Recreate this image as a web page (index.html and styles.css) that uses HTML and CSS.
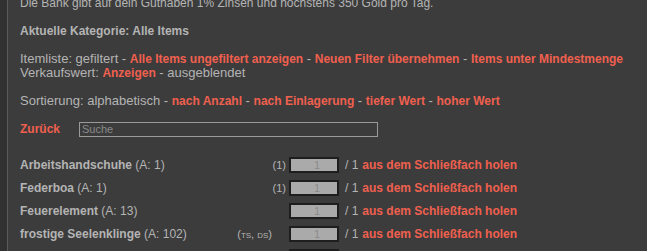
FILE: index.html
```html
<!DOCTYPE html>
<html lang="de">
<head>
    <meta charset="UTF-8">
    <title>Bank - Schließfach</title>
    <link rel="stylesheet" href="styles.css">
</head>
<body>
    <div class="frame">
        <div class="rail"></div>

        <div class="content">
            <!-- Info -->
            <p class="info intro">Die Bank gibt auf dein Guthaben 1% Zinsen und höchstens 350 Gold pro Tag.</p>

            <p class="info"><b>Aktuelle Kategorie: Alle Items</b></p>

            <p class="info">
                Itemliste: gefiltert - <a href="#">Alle Items ungefiltert anzeigen</a> - <a href="#">Neuen Filter übernehmen</a> - <a href="#">Items unter Mindestmenge</a><br>
                Verkaufswert: <a href="#">Anzeigen</a> - ausgeblendet
            </p>

            <p class="info">
                Sortierung: alphabetisch - <a href="#">nach Anzahl</a> - <a href="#">nach Einlagerung</a> - <a href="#">tiefer Wert</a> - <a href="#">hoher Wert</a>
            </p>

            <!-- Search -->
            <div class="search-row">
                <a href="#" class="back">Zurück</a>
                <input type="text" class="search" placeholder="Suche">
            </div>

            <!-- Items -->
            <div class="items">
                <div class="item">
                    <span class="name"><b>Arbeitshandschuhe</b> (A: 1)</span>
                    <span class="note">(1)</span>
                    <input type="text" class="amount" value="1">
                    <span class="max">/ 1</span>
                    <a href="#" class="take">aus dem Schließfach holen</a>
                </div>
                <div class="item">
                    <span class="name"><b>Federboa</b> (A: 1)</span>
                    <span class="note">(1)</span>
                    <input type="text" class="amount" value="1">
                    <span class="max">/ 1</span>
                    <a href="#" class="take">aus dem Schließfach holen</a>
                </div>
                <div class="item">
                    <span class="name"><b>Feuerelement</b> (A: 13)</span>
                    <span class="note"></span>
                    <input type="text" class="amount" value="1">
                    <span class="max">/ 1</span>
                    <a href="#" class="take">aus dem Schließfach holen</a>
                </div>
                <div class="item">
                    <span class="name"><b>frostige Seelenklinge</b> (A: 102)</span>
                    <span class="note tags">(ts, ds)</span>
                    <input type="text" class="amount" value="1">
                    <span class="max">/ 1</span>
                    <a href="#" class="take">aus dem Schließfach holen</a>
                </div>
                <div class="item">
                    <span class="name"><b>Gartenschere</b> (A: 1)</span>
                    <span class="note"></span>
                    <input type="text" class="amount" value="1">
                    <span class="max">/ 1</span>
                    <a href="#" class="take">aus dem Schließfach holen</a>
                </div>
            </div>
        </div>
    </div>
</body>
</html>
```

FILE: styles.css
```css
/* Global */
body {
    margin: 0;
    background-color: #3c3c3c;
    color: #b4b4b4;
    font-family: "Liberation Sans", Arial, sans-serif;
    font-size: 12px;
    line-height: 14px;
    overflow: hidden;
}

a {
    color: #f0604f;
    font-weight: bold;
    font-size: 12px;
    text-decoration: none;
}

b {
    font-size: 12px;
}

.frame {
    display: flex;
    min-height: 100vh;
}

.rail {
    width: 7px;
    flex-shrink: 0;
    background: #313131;
    border-right: 1px solid #5a5a5a;
}

.content {
    padding: 0 12px;
    margin-top: -4px;
}

/* Info block */
.info {
    margin: 0 0 14px;
    font-size: 13px;
}

.info.intro {
    font-size: 12px;
}

/* Search */
.search-row {
    display: flex;
    align-items: center;
    height: 14px;
    margin-top: 2px;
    margin-bottom: 17px;
}

.back {
    width: 59px;
}

.search {
    width: 299px;
    height: 15px;
    padding: 0 2px;
    box-sizing: border-box;
    border: 1px solid #9a9a9a;
    background: transparent;
    color: #b4b4b4;
    font-family: inherit;
    font-size: 11px;
    outline: none;
}

.search::placeholder {
    color: #8a8a8a;
}

/* Items */
.item {
    display: flex;
    align-items: center;
    height: 23px;
}

.name {
    width: 200px;
    white-space: nowrap;
}

.note {
    width: 66px;
    text-align: right;
    font-size: 11px;
    white-space: nowrap;
}

.note.tags {
    font-variant: small-caps;
    padding-right: 14px;
    box-sizing: border-box;
}

.amount {
    width: 50px;
    height: 16px;
    margin-left: 3px;
    box-sizing: border-box;
    border: 2px solid #1e1e1e;
    background: #aaaaaa;
    color: #8a8a8a;
    font-family: inherit;
    font-size: 11px;
    text-align: right;
    padding: 0 17px 0 0;
}

.max {
    margin-left: 6px;
    margin-right: 4px;
}
```
